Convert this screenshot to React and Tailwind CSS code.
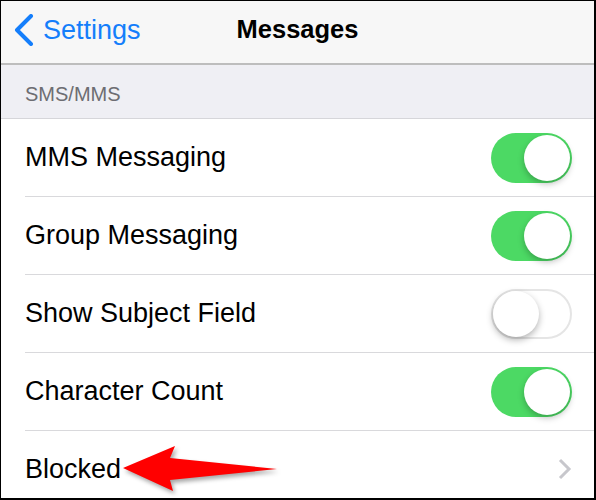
import React from 'react';

const ROWS = [
    { label: 'MMS Messaging', on: true },
    { label: 'Group Messaging', on: true },
    { label: 'Show Subject Field', on: false },
    { label: 'Character Count', on: true },
];

const Toggle = ({ on }) => (
    on ? (
        <div className="w-[81px] h-[50px] rounded-full bg-[#4cd964] flex items-center justify-end p-[2px]">
            <div className="w-[46px] h-[46px] rounded-full bg-white shadow-[0_3px_6px_rgba(0,0,0,0.25)]" />
        </div>
    ) : (
        <div className="w-[81px] h-[50px] rounded-full bg-white border-2 border-[#e5e5e5] flex items-center justify-start">
            <div className="w-[46px] h-[46px] rounded-full bg-white shadow-[0_3px_7px_rgba(0,0,0,0.3)]" />
        </div>
    )
);

const App = () => {
    return (
        <div className="w-[596px] h-[500px] overflow-hidden bg-white border-t border-l border-r-2 border-b-2 border-black font-['Liberation_Sans',Arial,sans-serif]">
            {/* nav bar */}
            <div className="h-[64px] bg-[#f7f7f7] border-b-2 border-[#bdbdbd] grid grid-cols-[1fr_auto_1fr] items-center pb-[4px]">
                <div className="flex items-center pl-[13px] gap-[9px] text-[#147efb]">
                    <svg width="20" height="32" viewBox="0 0 20 32">
                        <path d="M17 2 L3 16 L17 30" fill="none" stroke="#147efb" strokeWidth="4" strokeLinecap="round" strokeLinejoin="round" />
                    </svg>
                    <span className="text-[27px] leading-none">Settings</span>
                </div>
                <div className="text-[25.5px] font-bold text-black leading-none">Messages</div>
                <div />
            </div>

            {/* section header */}
            <div className="h-[54px] bg-[#efeff4] border-b border-[#d6d6da] flex items-end pl-6 pb-[14px]">
                <span className="text-[20px] text-[#6d6d72] leading-none">SMS/MMS</span>
            </div>

            {/* rows */}
            {ROWS.map(row => (
                <div key={row.label} className="pl-6">
                    <div className="h-[78px] border-b border-[#d9d9dc] flex items-center justify-between pr-[22px]">
                        <span className="text-[27px] text-black leading-none">{row.label}</span>
                        <Toggle on={row.on} />
                    </div>
                </div>
            ))}

            <div className="pl-6 relative">
                <div className="h-[76px] flex items-center justify-between pr-[22px]">
                    <span className="text-[27px] text-black leading-none">Blocked</span>
                    <svg width="14" height="22" viewBox="0 0 14 22">
                        <path d="M2 2 L11 11 L2 20" fill="none" stroke="#c7c7cc" strokeWidth="3" />
                    </svg>
                </div>
                <svg className="absolute left-[117px] top-[10px] drop-shadow-[2px_3px_2px_rgba(0,0,0,0.35)]" width="165" height="56" viewBox="0 0 165 56">
                    <path d="M5 27 L57 5 L52 17 L159 28 L52 39 L55 50 Z" fill="#ff0000" />
                </svg>
            </div>
        </div>
    );
};

export default App;
